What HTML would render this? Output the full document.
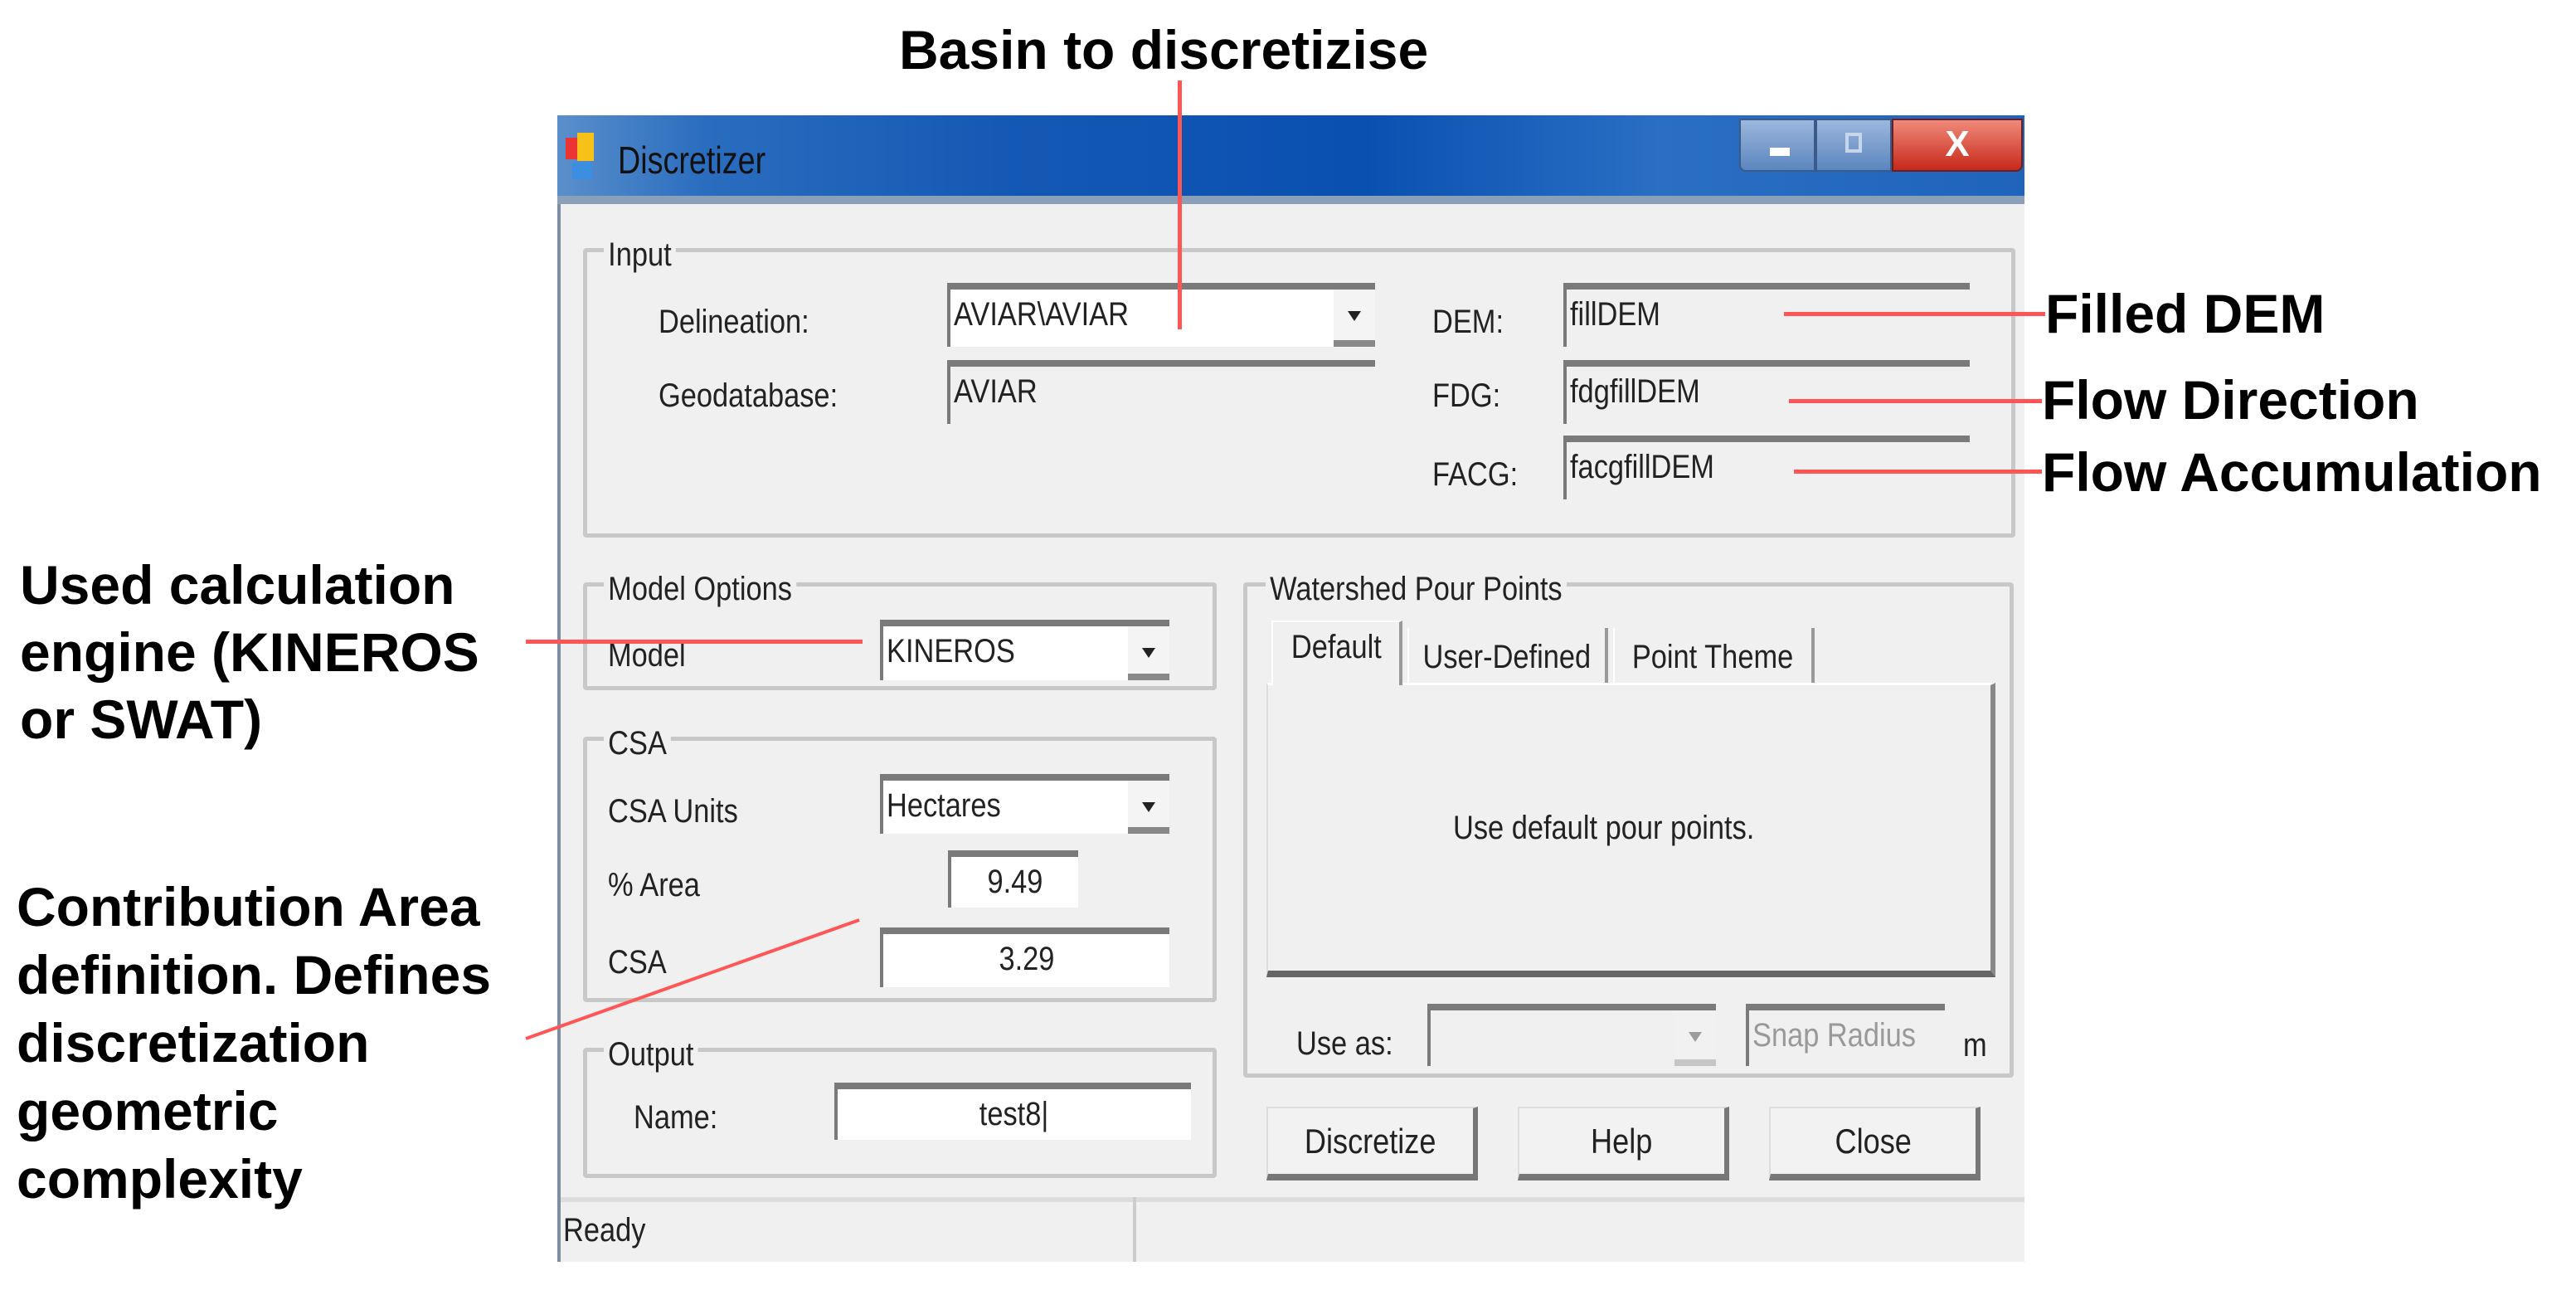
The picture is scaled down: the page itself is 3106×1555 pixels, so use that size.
<!DOCTYPE html>
<html><head><meta charset="utf-8"><style>
*{margin:0;padding:0;box-sizing:border-box}
body{width:3106px;height:1555px;background:#fff;position:relative;overflow:hidden;font-family:"Liberation Sans",sans-serif}
.a{position:absolute}
.ann{position:absolute;font-weight:bold;font-size:66px;color:#000;white-space:nowrap;line-height:1}
.lbl{position:absolute;font-size:40px;color:#222;white-space:nowrap;line-height:1;transform:scaleX(.86);transform-origin:left center}
.grp{position:absolute;border:5px solid #c8c8c8;border-radius:4px}
.gt{position:absolute;background:#f0f0f0;font-size:40px;color:#222;padding:0 6px;line-height:1;transform:scaleX(.86);transform-origin:left center}
.tb{position:absolute;border-top:8px solid #7a7a7a;border-left:4px solid #7a7a7a;background:#f0f0f0;font-size:40px;color:#222;padding:10px 4px;line-height:1;white-space:nowrap}
.tb span{display:inline-block;transform:scaleX(.86);transform-origin:left center}
.tb.c span{transform-origin:center}
.tb.w{background:#fff}
.dd{position:absolute;right:0;top:0;bottom:0;width:50px;background:#f4f4f4;border-bottom:8px solid #888}
.dd:after{content:"";position:absolute;left:17px;top:26px;border-left:8px solid transparent;border-right:8px solid transparent;border-top:12px solid #222}
.btn{position:absolute;background:#f2f2f2;border-right:6px solid #777;border-bottom:8px solid #777;border-top:2px solid #ddd;border-left:2px solid #ddd;font-size:42px;color:#222;text-align:center;line-height:80px}
.btn span{display:inline-block;transform:scaleX(.86)}
.red{position:absolute;background:#f55;}
</style></head><body>

<div class="ann" style="left:1084px;top:27px">Basin to discretizise</div>
<div class="ann" style="left:2466px;top:345px">Filled DEM</div>
<div class="ann" style="left:2462px;top:449px">Flow Direction</div>
<div class="ann" style="left:2462px;top:536px">Flow Accumulation</div>
<div class="ann" style="left:24px;top:665px;line-height:81px">Used calculation<br>engine (KINEROS<br>or SWAT)</div>
<div class="ann" style="left:20px;top:1052px;line-height:82px">Contribution Area<br>definition. Defines<br>discretization<br>geometric<br>complexity</div>

<div class="a" style="left:672px;top:139px;width:1769px;height:1382px;background:#f0f0f0;border-left:4px solid #7d8ea3"></div>
<div class="a" style="left:672px;top:139px;width:1769px;height:103px;background:linear-gradient(90deg,#5a8fcb 0%,#2a6dbf 10%,#1559b5 30%,#0a50b0 55%,#2a6fc4 75%,#1f64bb 100%)"></div>
<div class="a" style="left:672px;top:236px;width:1769px;height:10px;background:#8aa0b8"></div>
<div class="a" style="left:682px;top:166px;width:14px;height:26px;background:#e33"></div>
<div class="a" style="left:696px;top:160px;width:20px;height:34px;background:#f6c21a"></div>
<div class="a" style="left:690px;top:196px;width:24px;height:20px;background:#3b8ee0"></div>
<div class="a" style="left:745px;top:166px;font-size:46px;color:#111;transform:scaleX(.82);transform-origin:left">Discretizer</div>
<div class="a" style="left:2097px;top:143px;width:92px;height:64px;background:linear-gradient(#9bb7dc,#5c86c0);border:2px solid #3a5a8a;border-radius:0 0 0 8px"></div>
<div class="a" style="left:2134px;top:178px;width:24px;height:10px;background:#fff"></div>
<div class="a" style="left:2189px;top:143px;width:92px;height:64px;background:linear-gradient(#9bb7dc,#5c86c0);border:2px solid #3a5a8a"></div>
<div class="a" style="left:2225px;top:160px;width:20px;height:24px;border:4px solid #c8d6ea"></div>
<div class="a" style="left:2281px;top:143px;width:158px;height:64px;background:linear-gradient(#f08a7a,#c7281a);border:2px solid #6a2020;border-radius:0 0 8px 0;color:#fff;font-size:44px;font-weight:bold;text-align:center;line-height:58px">X</div>

<div class="grp" style="left:703px;top:299px;width:1727px;height:349px"></div>
<div class="gt" style="left:728px;top:287px">Input</div>
<div class="lbl" style="left:794px;top:368px">Delineation:</div>
<div class="lbl" style="left:794px;top:457px">Geodatabase:</div>
<div class="tb w" style="left:1142px;top:341px;width:516px;height:77px"><span>AVIAR\AVIAR</span><div class="dd"></div></div>
<div class="tb" style="left:1142px;top:434px;width:516px;height:77px"><span>AVIAR</span></div>
<div class="lbl" style="left:1727px;top:368px">DEM:</div>
<div class="lbl" style="left:1727px;top:457px">FDG:</div>
<div class="lbl" style="left:1727px;top:552px">FACG:</div>
<div class="tb" style="left:1885px;top:341px;width:490px;height:77px"><span>fillDEM</span></div>
<div class="tb" style="left:1885px;top:434px;width:490px;height:77px"><span>fdgfillDEM</span></div>
<div class="tb" style="left:1885px;top:525px;width:490px;height:77px"><span>facgfillDEM</span></div>

<div class="grp" style="left:703px;top:702px;width:764px;height:130px"></div>
<div class="gt" style="left:728px;top:690px">Model Options</div>
<div class="lbl" style="left:733px;top:770px">Model</div>
<div class="tb w" style="left:1061px;top:747px;width:349px;height:73px"><span>KINEROS</span><div class="dd"></div></div>

<div class="grp" style="left:703px;top:888px;width:764px;height:320px"></div>
<div class="gt" style="left:728px;top:876px">CSA</div>
<div class="lbl" style="left:733px;top:958px">CSA Units</div>
<div class="tb w" style="left:1061px;top:933px;width:349px;height:72px"><span>Hectares</span><div class="dd"></div></div>
<div class="lbl" style="left:733px;top:1047px">% Area</div>
<div class="tb w c" style="left:1143px;top:1025px;width:157px;height:69px;text-align:center"><span>9.49</span></div>
<div class="lbl" style="left:733px;top:1140px">CSA</div>
<div class="tb w c" style="left:1061px;top:1118px;width:349px;height:72px;text-align:center"><span>3.29</span></div>

<div class="grp" style="left:703px;top:1263px;width:764px;height:157px"></div>
<div class="gt" style="left:728px;top:1251px">Output</div>
<div class="lbl" style="left:764px;top:1327px">Name:</div>
<div class="tb w c" style="left:1006px;top:1305px;width:430px;height:69px;text-align:center"><span>test8|</span></div>

<div class="grp" style="left:1499px;top:702px;width:929px;height:597px"></div>
<div class="gt" style="left:1526px;top:690px">Watershed Pour Points</div>
<div class="a" style="left:1527px;top:823px;width:879px;height:355px;background:#f0f0f0;border-top:3px solid #fff;border-right:6px solid #888;border-bottom:8px solid #666;border-left:2px solid #ddd"></div>
<div class="a" style="left:1533px;top:748px;width:158px;height:78px;background:#f0f0f0;border:2px solid #fff;border-right:4px solid #999;border-bottom:none;font-size:40px;text-align:center;line-height:60px;color:#222"><span style="display:inline-block;transform:scaleX(.86)">Default</span></div>
<div class="a" style="left:1697px;top:757px;width:242px;height:66px;background:#f0f0f0;border-right:4px solid #999;border-left:2px solid #fff;font-size:40px;text-align:center;line-height:70px;color:#222"><span style="display:inline-block;transform:scaleX(.86)">User-Defined</span></div>
<div class="a" style="left:1945px;top:757px;width:243px;height:66px;background:#f0f0f0;border-right:4px solid #999;border-left:2px solid #fff;font-size:40px;text-align:center;line-height:70px;color:#222"><span style="display:inline-block;transform:scaleX(.86)">Point Theme</span></div>
<div class="lbl" style="left:1752px;top:978px">Use default pour points.</div>
<div class="lbl" style="left:1563px;top:1238px">Use as:</div>
<div class="tb" style="left:1721px;top:1210px;width:348px;height:75px"><div class="dd" style="opacity:.4"></div></div>
<div class="tb" style="left:2105px;top:1210px;width:240px;height:75px;color:#999"><span>Snap Radius</span></div>
<div class="lbl" style="left:2367px;top:1240px">m</div>

<div class="btn" style="left:1527px;top:1334px;width:255px;height:89px"><span>Discretize</span></div>
<div class="btn" style="left:1830px;top:1334px;width:255px;height:89px"><span>Help</span></div>
<div class="btn" style="left:2133px;top:1334px;width:255px;height:89px"><span>Close</span></div>

<div class="a" style="left:676px;top:1443px;width:1765px;height:6px;background:#ddd"></div>
<div class="a" style="left:1366px;top:1443px;width:4px;height:78px;background:#ccc"></div>
<div class="lbl" style="left:679px;top:1463px">Ready</div>

<div class="red" style="left:1420px;top:97px;width:5px;height:300px"></div>
<div class="red" style="left:2151px;top:376px;width:315px;height:5px"></div>
<div class="red" style="left:2157px;top:481px;width:305px;height:5px"></div>
<div class="red" style="left:2163px;top:566px;width:299px;height:5px"></div>
<div class="red" style="left:634px;top:771px;width:406px;height:5px"></div>
<svg class="a" style="left:0;top:0" width="3106" height="1555"><line x1="634" y1="1252" x2="1036" y2="1109" stroke="#f55" stroke-width="4"/></svg>
</body></html>
